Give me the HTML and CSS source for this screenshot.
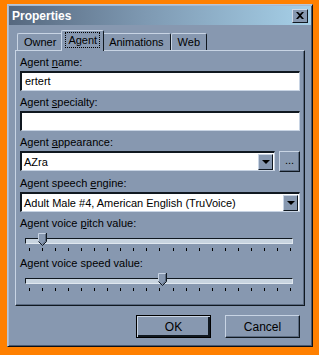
FILE: index.html
```html
<!DOCTYPE html>
<html lang="en">
<head>
  <meta charset="UTF-8">
  <title>Properties</title>
  <link rel="stylesheet" href="styles.css">
</head>
<body>
  <div class="window">
    <div class="titlebar">
      <span class="title">Properties</span>
      <div class="close">
        <svg width="8" height="7" viewBox="0 0 8 7"><path d="M0 0h2l2 2 2-2h2L5 3.5 8 7H6L4 5 2 7H0l3-3.5z" fill="#000"/></svg>
      </div>
    </div>
    <div class="content">
      <div class="tabs">
        <div class="tab">Owner</div>
        <div class="tab active"><span class="focus">Agent</span></div>
        <div class="tab">Animations</div>
        <div class="tab">Web</div>
      </div>
      <div class="panel">
        <div class="label">Agent <u>n</u>ame:</div>
        <div class="textbox">ertert</div>
        <div class="label">Agent <u>s</u>pecialty:</div>
        <div class="textbox"></div>
        <div class="label">Agent <u>a</u>ppearance:</div>
        <div class="combo-row">
          <div class="combo">
            <span class="combo-text">AZra</span>
            <span class="arrow-btn"><span class="arrow"></span></span>
          </div>
          <div class="btn dots">...</div>
        </div>
        <div class="label">Agent speech <u>e</u>ngine:</div>
        <div class="combo">
          <span class="combo-text">Adult Male #4, American English (TruVoice)</span>
          <span class="arrow-btn"><span class="arrow"></span></span>
        </div>
        <div class="label">Agent voice <u>p</u>itch value:</div>
        <div class="slider">
          <div class="track"></div>
          <svg class="thumb" style="left: 18px" width="9" height="13" viewBox="0 0 9 13">
            <path d="M0.5 0.5h8v8l-4 4-4-4z" fill="#8798b0"/>
            <path d="M0.5 8.5v-8h7" fill="none" stroke="#c8d4e4"/>
            <path d="M8.5 0v8.5l-4 4-4-4" fill="none" stroke="#101820"/>
            <path d="M7.5 1v7l-3 3" fill="none" stroke="#5a6a80"/>
          </svg>
          <div class="ticks">
            <i></i><i></i><i></i><i></i><i></i><i></i><i></i><i></i><i></i><i></i><i></i><i></i><i></i><i></i><i></i><i></i><i></i><i></i><i></i><i></i><i></i>
          </div>
        </div>
        <div class="label">Agent voice speed value:</div>
        <div class="slider">
          <div class="track"></div>
          <svg class="thumb" style="left: 138px" width="9" height="13" viewBox="0 0 9 13">
            <path d="M0.5 0.5h8v8l-4 4-4-4z" fill="#8798b0"/>
            <path d="M0.5 8.5v-8h7" fill="none" stroke="#c8d4e4"/>
            <path d="M8.5 0v8.5l-4 4-4-4" fill="none" stroke="#101820"/>
            <path d="M7.5 1v7l-3 3" fill="none" stroke="#5a6a80"/>
          </svg>
          <div class="ticks">
            <i></i><i></i><i></i><i></i><i></i><i></i><i></i><i></i><i></i><i></i><i></i><i></i><i></i><i></i><i></i><i></i><i></i><i></i><i></i><i></i><i></i>
          </div>
        </div>
      </div>
      <div class="buttons">
        <div class="btn default">OK</div>
        <div class="btn">Cancel</div>
      </div>
    </div>
  </div>
</body>
</html>
```

FILE: styles.css
```css
body {
  margin: 0;
  background: #ff8000;
  font-family: "Liberation Sans", Arial, sans-serif;
  font-size: 11px;
  color: #000;
}

.window {
  margin: 4px 0 0 7px;
  width: 306px;
  height: 343px;
  box-sizing: border-box;
  background: #8798b0;
  border-top: 1px solid #b8c6d8;
  border-left: 1px solid #b8c6d8;
  border-right: 1px solid #0c1018;
  border-bottom: 1px solid #0c1018;
  box-shadow: inset 1px 1px 0 #a8b8cc, inset -1px -1px 0 #4c5a6e;
  padding: 1px 1px 0 1px;
}

.titlebar {
  height: 19px;
  display: flex;
  align-items: center;
  justify-content: space-between;
  padding: 0 3px 0 3px;
  background: linear-gradient(to right, #56687f, #7e99b2 45%, #a6d0e8);
}

.title {
  color: #fff;
  font-weight: bold;
  font-size: 12px;
}

.close {
  width: 14px;
  height: 12px;
  display: flex;
  align-items: center;
  justify-content: center;
  background: #8798b0;
  border-top: 1px solid #d0dae8;
  border-left: 1px solid #d0dae8;
  border-right: 1px solid #101820;
  border-bottom: 1px solid #101820;
}

.content {
  padding: 5px 6px 0 6px;
}

.tabs {
  display: flex;
  align-items: flex-end;
  height: 20px;
  padding-left: 2px;
}

.tab {
  height: 17px;
  box-sizing: border-box;
  padding: 2px 6px 0 6px;
  border-top: 1px solid #c8d4e4;
  border-left: 1px solid #c8d4e4;
  border-right: 1px solid #101820;
  border-radius: 2px 2px 0 0;
}

.tab.active {
  height: 21px;
  margin: 0 -2px;
  position: relative;
  z-index: 1;
  background: #8798b0;
  padding: 2px 4px 0 4px;
  margin-bottom: -1px;
}

.focus {
  display: inline-block;
  padding: 0 2px;
  line-height: 14px;
  outline: 1px dotted #000;
}

.panel {
  height: 256px;
  box-sizing: border-box;
  border-top: 1px solid #c8d4e4;
  border-left: 1px solid #c8d4e4;
  border-right: 1px solid #101820;
  border-bottom: 1px solid #101820;
  box-shadow: inset -1px -1px 0 #5a6a80;
  padding: 4px 4px 0 4px;
}

.label {
  height: 14px;
  line-height: 14px;
  margin-bottom: 2px;
}

.textbox {
  height: 20px;
  box-sizing: border-box;
  background: #fff;
  border-top: 2px solid #101820;
  border-left: 2px solid #101820;
  border-right: 1px solid #c8d4e4;
  border-bottom: 1px solid #c8d4e4;
  padding: 1px 3px;
  line-height: 15px;
  margin-bottom: 4px;
}

.combo-row {
  display: flex;
  gap: 4px;
  margin-bottom: 4px;
}

.combo-row .combo {
  flex: 1;
  margin-bottom: 0;
}

.combo {
  height: 20px;
  box-sizing: border-box;
  display: flex;
  align-items: center;
  background: #fff;
  border-top: 2px solid #101820;
  border-left: 2px solid #101820;
  border-right: 1px solid #c8d4e4;
  border-bottom: 1px solid #c8d4e4;
  margin-bottom: 4px;
}

.combo-text {
  flex: 1;
  padding-left: 2px;
  white-space: nowrap;
}

.arrow-btn {
  width: 15px;
  height: 16px;
  box-sizing: border-box;
  margin-right: 1px;
  display: flex;
  align-items: center;
  justify-content: center;
  background: #8798b0;
  border-top: 1px solid #c8d4e4;
  border-left: 1px solid #c8d4e4;
  border-right: 1px solid #101820;
  border-bottom: 1px solid #101820;
}

.arrow {
  width: 0;
  height: 0;
  border-left: 4px solid transparent;
  border-right: 4px solid transparent;
  border-top: 4px solid #000;
}

.btn {
  box-sizing: border-box;
  display: flex;
  align-items: center;
  justify-content: center;
  background: #8798b0;
  border-top: 1px solid #c8d4e4;
  border-left: 1px solid #c8d4e4;
  border-right: 1px solid #101820;
  border-bottom: 1px solid #101820;
  box-shadow: inset -1px -1px 0 #5a6a80;
}

.dots {
  width: 21px;
  height: 21px;
  padding-bottom: 3px;
}

.slider {
  position: relative;
  height: 22px;
  margin: 0 0 2px 0;
}

.track {
  position: absolute;
  left: 5px;
  right: 7px;
  top: 6px;
  height: 6px;
  box-sizing: border-box;
  background: #c8d4e0;
  border-top: 1px solid #101820;
  border-left: 1px solid #101820;
  border-right: 1px solid #e0e8f0;
  border-bottom: 1px solid #e0e8f0;
}

.thumb {
  position: absolute;
  top: 1px;
}

.ticks {
  position: absolute;
  left: 9px;
  right: 9px;
  top: 16px;
  display: flex;
  justify-content: space-between;
}

.ticks i {
  width: 1px;
  height: 3px;
  background: #000;
}

.buttons {
  display: flex;
  justify-content: flex-end;
  gap: 14px;
  padding: 9px 5px 0 0;
}

.buttons .btn {
  width: 75px;
  height: 23px;
  font-size: 12px;
}

.btn.default {
  border: 1px solid #000;
  box-shadow: inset 1px 1px 0 #c8d4e4, inset -2px -2px 0 #101820;
}
```
